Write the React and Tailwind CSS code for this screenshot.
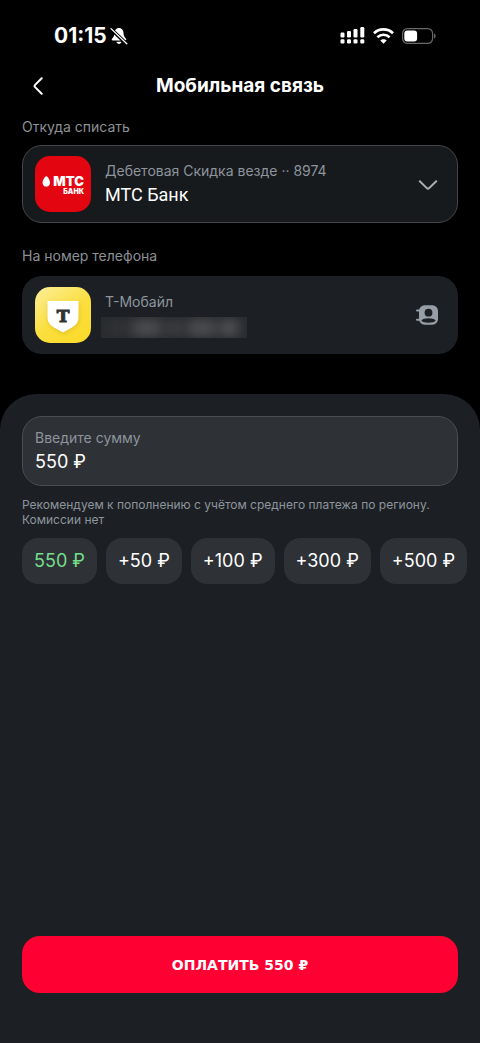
import { useState } from "react";

const topUps = [50, 100, 300, 500];

function StatusBar() {
  return (
    <div className="flex h-[71px] items-center justify-between pr-[44px] pl-[54px] text-white">
      <div className="flex items-center gap-[3px]">
        <span className="text-[21px] leading-6 font-bold">01:15</span>
        <svg className="size-[18px]" viewBox="0 0 18 18" aria-hidden="true">
          <path
            d="M9 1C6.6 1 4.8 2.7 4.6 5.3 4.4 8.6 3.7 9.9 2.2 11.5c-.9 1-.5 2 .8 2h12c1.300 0 1.700-1 .8-2-1.500-1.600-2.200-2.900-2.400-6.200C13.200 2.700 11.400 1 9 1Z M6.500 14.700h5C11.300 16 10.300 16.900 9 16.900S6.700 16 6.500 14.700Z"
            fill="currentColor"
          />
          <path d="M1.200 2.200 16.500 16.800" stroke="#000" strokeWidth="3.600" />
          <path d="M1 1.600 16.800 16.700" stroke="currentColor" strokeWidth="1.300" strokeLinecap="round" />
        </svg>
      </div>
      <div className="flex items-center gap-2">
        <svg className="h-[17px] w-[25px]" viewBox="0 0 25 17" fill="currentColor" aria-hidden="true">
          <rect x="0.500" y="5.500" width="4" height="5" rx="1.200" />
          <rect x="7" y="4" width="4" height="6.500" rx="1.200" />
          <rect x="13.500" y="2" width="4" height="8.500" rx="1.200" />
          <rect x="20.300" y="0" width="4" height="10.500" rx="1.200" />
          <rect x="0.500" y="12.200" width="4" height="4.300" rx="1.200" />
          <rect x="7" y="12.200" width="4" height="4.300" rx="1.200" />
          <rect x="13.500" y="12.200" width="4" height="4.300" rx="1.200" />
          <rect x="20.300" y="12.200" width="4" height="4.300" rx="1.200" />
        </svg>
        <svg className="h-[16px] w-[21px]" viewBox="0 0 21 16" fill="none" stroke="currentColor" strokeWidth="2.700" aria-hidden="true">
          <path d="M1 5.200C6.300.2 14.700.2 20 5.200" />
          <path d="M4.400 9.200C8 5.900 13 5.900 16.600 9.200" />
          <path d="M10.500 15.700 7.300 12.400c1.700-1.700 4.700-1.700 6.400 0Z" fill="currentColor" stroke="none" />
        </svg>
        <svg className="h-[16px] w-[34px]" viewBox="0 0 34 16" aria-hidden="true">
          <rect x="0.600" y="0.600" width="30" height="14.800" rx="4.800" fill="none" stroke="#69696c" strokeWidth="1.200" />
          <rect x="2.300" y="2.400" width="12.800" height="11.200" rx="3" fill="#fff" />
          <path d="M32 5.500c2.200.8 2.200 4.200 0 5Z" fill="#69696c" />
        </svg>
      </div>
    </div>
  );
}

function BankLogo() {
  return (
    <svg className="size-[56px] shrink-0" viewBox="0 0 56 56" aria-hidden="true">
      <rect width="56" height="56" rx="15" fill="#e30611" />
      <path d="M11.300 20.300c1.300 0 3.700 3.700 3.700 6.400 0 2.400-1.500 3.900-3.700 3.900s-3.700-1.500-3.700-3.900c0-2.700 2.400-6.400 3.700-6.400Z" fill="#fff" />
      <g fill="#fff" fontFamily="Inter, sans-serif" fontWeight="900" textAnchor="end">
        <text x="49" y="30" fontSize="13">МТС</text>
        <text x="49" y="38" fontSize="7">БАНК</text>
      </g>
    </svg>
  );
}

function OperatorLogo() {
  return (
    <svg className="size-[56px] shrink-0" viewBox="0 0 56 56" aria-hidden="true">
      <defs>
        <linearGradient id="gold" x1="0" y1="0" x2="0.700" y2="1">
          <stop offset="0" stopColor="#fbee9a" />
          <stop offset="0.600" stopColor="#fbdf3e" />
          <stop offset="1" stopColor="#fbdb2c" />
        </linearGradient>
        <filter id="soft" x="-30%" y="-30%" width="160%" height="160%">
          <feGaussianBlur stdDeviation="2" />
        </filter>
      </defs>
      <rect width="56" height="56" rx="15" fill="url(#gold)" />
      <path d="M13 16h31v15c0 6-4 9-7 11l-8.500 5-8.500-5c-3-2-7-5-7-11Z" fill="#b88f0a" opacity=".4" filter="url(#soft)" />
      <path d="M12.500 14h31v16c0 5.500-3 8.400-6.500 10.400L28 45.500l-9-5.100c-3.500-2-6.500-4.900-6.500-10.400Z" fill="#fff" />
      <text x="28" y="35" fontSize="17" fontFamily="DejaVu Serif, serif" fontWeight="700" textAnchor="middle" fill="#333" stroke="#333" strokeWidth="1">
        Т
      </text>
    </svg>
  );
}

export default function App() {
  const [amount, setAmount] = useState(550);
  return (
    <div className="flex min-h-screen flex-col bg-black font-['Inter','Liberation_Sans',sans-serif] text-white">
      <StatusBar />
      <header className="grid h-[30px] grid-cols-[32px_1fr_32px] items-center px-[22px]">
        <button type="button" aria-label="Назад" className="flex h-[30px] items-center justify-center">
          <svg className="h-[18px] w-[10px]" viewBox="0 0 10 18" fill="none" stroke="currentColor" strokeWidth="2" strokeLinecap="round" strokeLinejoin="round" aria-hidden="true">
            <path d="M8.700 1.200 2.100 7.900Q1 9 2.100 10.100L8.700 16.800" />
          </svg>
        </button>
        <h1 className="text-center text-[19px] leading-6 font-bold">Мобильная связь</h1>
      </header>

      <main className="flex flex-1 flex-col">
        <section className="px-[22px] pt-4">
          <h2 id="source" className="text-[14px] leading-5 text-[#8d9095]">Откуда списать</h2>
          <button
            type="button"
            aria-haspopup="listbox"
            aria-describedby="source"
            className="mt-2 flex h-[78px] w-full items-center gap-[14px] rounded-[20px] border border-[#45484b] bg-[#171a1d] px-3 text-left"
          >
            <BankLogo />
            <span className="flex flex-1 flex-col pb-[2px]">
              <span className="text-[14px] leading-6 text-[#8d949c]">Дебетовая Скидка везде ·· 8974</span>
              <span className="font-['Roboto',sans-serif] text-[18px] leading-6">МТС Банк</span>
            </span>
            <svg className="mr-[7px] h-[11px] w-[20px]" viewBox="0 0 20 11" fill="none" stroke="#adb0b3" strokeWidth="2" strokeLinecap="round" strokeLinejoin="round" aria-hidden="true">
              <path d="M1.800 2.200 8.800 9.100Q10 10.200 11.200 9.100L18.200 2.200" />
            </svg>
          </button>
        </section>

        <section className="px-[22px] pt-[23px]">
          <h2 className="text-[14px] leading-5 text-[#8d9095]">На номер телефона</h2>
          <div className="mt-[10px] flex h-[78px] items-center gap-[14px] rounded-[20px] bg-[#1c2024] px-[13px]">
            <OperatorLogo />
            <div className="flex flex-1 flex-col pb-[2px]">
              <span className="text-[14px] leading-6 text-[#8d949c]">Т-Мобайл</span>
              <div className="mt-[3px] -ml-1 flex h-[21px] w-[146px] items-center justify-between overflow-hidden bg-[#292c2f] px-2">
                <span className="h-3 w-5 rounded-full bg-[#323538] blur-[6px]" />
                <span className="h-4 w-8 rounded-full bg-[#4c4e50] blur-[6px]" />
                <span className="h-3 w-5 rounded-full bg-[#404346] blur-[6px]" />
                <span className="h-4 w-8 rounded-full bg-[#4c4e50] blur-[6px]" />
                <span className="h-4 w-5 rounded-full bg-[#525557] blur-[6px]" />
              </div>
            </div>
            <button type="button" aria-label="Контакты" className="mr-[7px]">
              <svg className="h-[20px] w-[22px]" viewBox="0 0 22 20" aria-hidden="true">
                <path d="M1 5.600h4M1 14.700h4" stroke="#969ea7" strokeWidth="2" strokeLinecap="round" />
                <rect x="3" y="0.300" width="19" height="19.400" rx="5.500" fill="#969ea7" />
                <circle cx="12.500" cy="7.700" r="3.900" fill="#1c2024" />
                <path d="M5.300 15.700c2-3.200 12.400-3.200 14.400 0-1.500 2.600-12.900 2.600-14.400 0Z" fill="#1c2024" />
              </svg>
            </button>
          </div>
        </section>

        <section className="mt-10 flex flex-1 flex-col rounded-t-[36px] bg-[#1c2024] px-[22px] pt-[22px] pb-[50px]">
          <div className="flex h-[70px] flex-col gap-[2px] rounded-[20px] border border-[#4a4e51] bg-[#2e3136] px-3 pt-[11px]">
            <label htmlFor="amount" className="text-[14px] leading-5 text-[#8d949c]">Введите сумму</label>
            <input
              id="amount"
              inputMode="numeric"
              value={`${amount} ₽`}
              onChange={(e) => setAmount(Number(e.target.value.replace(/\D/g, "")))}
              className="w-full bg-transparent text-[18px] leading-6 outline-none"
            />
          </div>
          <p className="mt-[11px] text-[12px] leading-[15px] text-[#8d949c]">
            Рекомендуем к пополнению с учётом среднего платежа по региону.
            <br />
            Комиссии нет
          </p>
          <div className="mt-[11px] -mr-[22px] flex gap-[9px] overflow-hidden">
            <button type="button" onClick={() => setAmount(550)} className="h-[46px] shrink-0 rounded-[16px] bg-[#2e3136] px-3 text-[18px] leading-6 text-[#74df8b]">
              550 ₽
            </button>
            {topUps.map((n) => (
              <button key={n} type="button" onClick={() => setAmount(amount + n)} className="h-[46px] shrink-0 rounded-[16px] bg-[#2e3136] px-3 text-[18px] leading-6">
                +{n} ₽
              </button>
            ))}
          </div>
          <button type="button" className="mt-auto h-[57px] w-full rounded-[18px] bg-[#ff0032] font-['DejaVu_Sans',sans-serif] text-[14px] leading-5 font-bold uppercase">
            Оплатить {amount} ₽
          </button>
        </section>
      </main>
    </div>
  );
}
